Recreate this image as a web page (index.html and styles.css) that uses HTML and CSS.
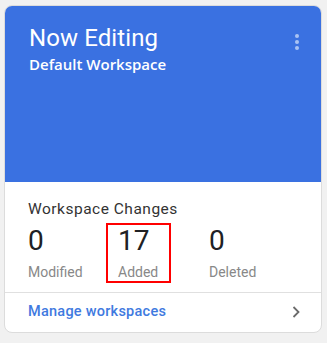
FILE: index.html
```html
<!DOCTYPE html>
<html>
<head>
<meta charset="utf-8">
<link rel="stylesheet" href="styles.css">
</head>
<body>
<div class="card">
  <div class="header">
    <div class="titles">
      <div class="title">Now Editing</div>
      <div class="subtitle">Default Workspace</div>
    </div>
    <div class="kebab"><span></span><span></span><span></span></div>
  </div>
  <div class="body">
    <div class="section-title">Workspace Changes</div>
    <div class="stats">
      <div class="stat"><div class="num">0</div><div class="label">Modified</div></div>
      <div class="stat highlighted"><div class="num">17</div><div class="label">Added</div><div class="mark"></div></div>
      <div class="stat"><div class="num">0</div><div class="label">Deleted</div></div>
    </div>
  </div>
  <div class="footer">
    <span class="link">Manage workspaces</span>
    <svg class="chev" width="10" height="14" viewBox="0 0 10 14"><path d="M2.5 2 L7.5 7 L2.5 12" fill="none" stroke="#6b6b6b" stroke-width="1.8"/></svg>
  </div>
</div>
</body>
</html>
```
FILE: styles.css
```css
html, body { margin: 0; padding: 0; }
body {
  background: #f1f1f1;
  font-family: Roboto, "Noto Sans", Arial, sans-serif;
  width: 327px;
  height: 343px;
  overflow: hidden;
}
.card {
  margin: 5px 5px 0 4px;
  width: 316px;
  height: 326px;
  background: #fff;
  border: 1px solid #dcdcdc;
  border-radius: 8px;
  overflow: hidden;
  display: flex;
  flex-direction: column;
}
.header {
  background: #3a71e1;
  height: 176px;
  flex: none;
  display: flex;
  justify-content: space-between;
  padding: 18px 0 0 24px;
  box-sizing: border-box;
  color: #fff;
}
.title {
  font-size: 24px;
  line-height: 28px;
  font-weight: 400;
  letter-spacing: 0.1px;
}
.subtitle {
  font-family: "Open Sans", Roboto, sans-serif;
  font-size: 15px;
  line-height: 20px;
  font-weight: 600;
  margin-top: 2px;
}
.kebab {
  display: flex;
  flex-direction: column;
  gap: 2px;
  padding: 10px 22px 0 0;
}
.kebab span {
  width: 4px;
  height: 4px;
  border-radius: 50%;
  background: #a9c3f3;
}
.body {
  padding: 17px 0 0 23px;
  height: 110px;
  box-sizing: border-box;
  flex: none;
}
.section-title {
  font-size: 15.5px;
  line-height: 20px;
  color: #333;
  letter-spacing: 0.5px;
}
.stats {
  display: grid;
  grid-template-columns: 90px 91px auto;
  margin-top: 5px;
}
.stat { position: relative; }
.num {
  font-size: 28px;
  line-height: 34px;
  color: #202124;
}
.label {
  font-size: 14px;
  line-height: 20px;
  color: #888;
  margin-top: 4px;
}
.mark {
  position: absolute;
  left: -12px;
  top: -1px;
  width: 65px;
  height: 60px;
  box-sizing: border-box;
  border: 2px solid #f00;
}
.footer {
  border-top: 1px solid #e0e0e0;
  flex: 1;
  display: flex;
  align-items: center;
  justify-content: space-between;
  padding: 0 20px 2px 23px;
}
.link {
  color: #3f7ae0;
  font-size: 14.5px;
  font-weight: 500;
  line-height: 20px;
  letter-spacing: 0.25px;
}
.chev { display: block; margin-top: 1px; }
```
